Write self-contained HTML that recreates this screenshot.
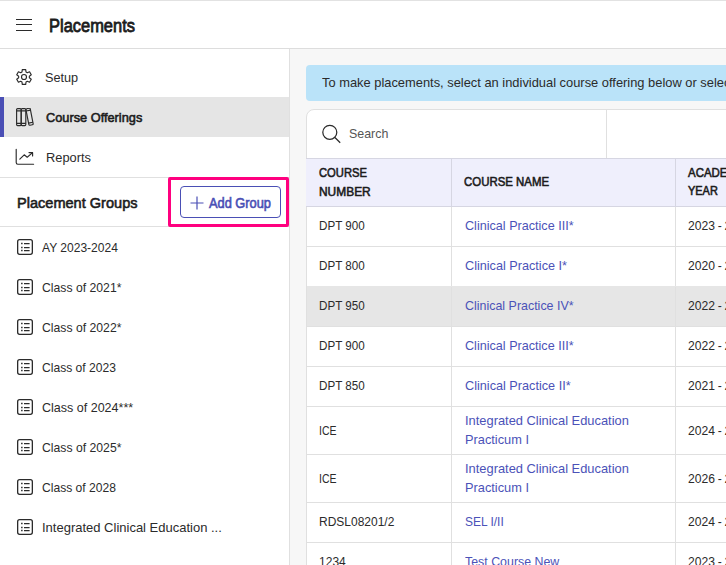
<!DOCTYPE html>
<html><head><meta charset="utf-8">
<style>
*{box-sizing:border-box;margin:0;padding:0}
html,body{width:726px;height:565px;overflow:hidden;background:#f7f7f7;font-family:"Liberation Sans",sans-serif}
.x{position:absolute;white-space:nowrap}
</style></head><body>
<div class="x" style="left:0px;top:0px;width:726px;height:48px;background:#fff;"></div>
<div class="x" style="left:0px;top:0px;width:726px;height:1px;background:#e2e2e2;"></div>
<div class="x" style="left:0px;top:48px;width:726px;height:1px;background:#dddddd;"></div>
<svg class="x" style="left:16px;top:17px" width="16" height="15" viewBox="0 0 16 15"><path d="M0 2.5H16M0 7.5H16M0 13.5H16" stroke="#2b2b2b" stroke-width="1.1"/></svg>
<div class="x" style="left:48.5px;top:14.92px;font-size:18.2px;line-height:22px;-webkit-text-stroke:0.6px currentColor;color:#1c1c1c;transform:scaleX(0.9044);transform-origin:0 0;-webkit-text-stroke:0.8px currentColor;">Placements</div>
<div class="x" style="left:0px;top:49px;width:289px;height:516px;background:#fff;"></div>
<div class="x" style="left:289px;top:49px;width:1px;height:516px;background:#e0e0e0;"></div>
<div class="x" style="left:0px;top:97px;width:289px;height:40px;background:#e5e5e5;"></div>
<div class="x" style="left:0px;top:97px;width:4px;height:40px;background:#4a4fb5;"></div>
<svg class="x" style="left:16px;top:69px" width="16" height="16" viewBox="0 0 16 16"><path d="M5.98 2.99 L6.29 0.59 L9.71 0.59 L10.02 2.99 L11.32 3.74 L13.56 2.82 L15.27 5.78 L13.35 7.25 L13.35 8.75 L15.27 10.22 L13.56 13.18 L11.32 12.26 L10.02 13.01 L9.71 15.41 L6.29 15.41 L5.98 13.01 L4.68 12.26 L2.44 13.18 L0.73 10.22 L2.65 8.75 L2.65 7.25 L0.73 5.78 L2.44 2.82 L4.68 3.74 Z" fill="none" stroke="#2b2b2b" stroke-width="1.15" stroke-linejoin="round"/><circle cx="8" cy="8" r="2.5" fill="none" stroke="#2b2b2b" stroke-width="1.15"/></svg>
<div class="x" style="left:44.7px;top:70.21px;font-size:13.2px;line-height:16px;color:#2b2b2b;transform:scaleX(0.9624);transform-origin:0 0;">Setup</div>
<svg class="x" style="left:16px;top:108px" width="19" height="19" viewBox="0 0 19 19"><g fill="none" stroke="#2b2b2b" stroke-width="1.15" stroke-linejoin="round"><rect x="0.6" y="0.6" width="4.6" height="17" rx="1"/><rect x="5.2" y="0.6" width="4.6" height="17" rx="1"/><path d="M0.6 2.8H9.8M0.6 15.3H9.8"/><g transform="rotate(-11 9.8 0.9)"><rect x="9.8" y="0.9" width="4.4" height="16.8" rx="1"/><path d="M9.8 3H14.2M9.8 15.4H14.2"/></g></g></svg>
<div class="x" style="left:46px;top:109.64px;font-size:13.3px;line-height:16px;-webkit-text-stroke:0.6px currentColor;color:#1c1c1c;transform:scaleX(0.9602);transform-origin:0 0;">Course Offerings</div>
<svg class="x" style="left:15px;top:148px" width="20" height="18" viewBox="0 0 20 18"><g fill="none" stroke="#2b2b2b" stroke-width="1.15" stroke-linejoin="round" stroke-linecap="round"><path d="M1.2 1.2V14.6Q1.2 16.2 2.8 16.2H18.6"/><path d="M4.8 11.2L9.2 6.8L12.2 9.2L17.6 4.6M14 4.6H17.6V8"/></g></svg>
<div class="x" style="left:46.3px;top:150.21px;font-size:13.2px;line-height:16px;color:#2b2b2b;transform:scaleX(0.9736);transform-origin:0 0;">Reports</div>
<div class="x" style="left:0px;top:177px;width:289px;height:1px;background:#e0e0e0;"></div>
<div class="x" style="left:16.7px;top:194.39px;font-size:15.2px;line-height:18px;-webkit-text-stroke:0.6px currentColor;color:#1c1c1c;transform:scaleX(0.9580);transform-origin:0 0;">Placement Groups</div>
<div class="x" style="left:180px;top:186px;width:101px;height:32px;background:transparent;box-sizing:border-box;border:1px solid #4a4fb5;border-radius:4px"></div>
<svg class="x" style="left:190px;top:196px" width="14" height="14" viewBox="0 0 14 14"><path d="M7 0.5V13.5M0.5 7H13.5" stroke="#4a4fb5" stroke-width="1.2"/></svg>
<div class="x" style="left:209.3px;top:195.48px;font-size:14px;line-height:17px;-webkit-text-stroke:0.6px currentColor;color:#4a4fb5;transform:scaleX(0.9157);transform-origin:0 0;">Add Group</div>
<div class="x" style="left:0px;top:226px;width:289px;height:1px;background:#e0e0e0;"></div>
<div class="x" style="left:168px;top:177px;width:121px;height:50px;background:transparent;box-sizing:border-box;border:3px solid #ff007f;border-radius:2px"></div>
<svg class="x" style="left:17px;top:239px" width="16" height="16" viewBox="0 0 16 16"><rect x="0.65" y="0.65" width="14.7" height="14.7" rx="2" fill="none" stroke="#2b2b2b" stroke-width="1.3"/><path d="M4.1 4.5h1.5M4.1 8.5h1.5M4.1 11.5h1.5" stroke="#2b2b2b" stroke-width="1.5"/><path d="M7 4.5h5.6M7 8.5h5.6M7 11.5h5.6" stroke="#2b2b2b" stroke-width="1.25"/></svg>
<div class="x" style="left:42.4px;top:239.91px;font-size:13.2px;line-height:16px;color:#2b2b2b;transform:scaleX(0.9136);transform-origin:0 0;">AY 2023-2024</div>
<svg class="x" style="left:17px;top:279px" width="16" height="16" viewBox="0 0 16 16"><rect x="0.65" y="0.65" width="14.7" height="14.7" rx="2" fill="none" stroke="#2b2b2b" stroke-width="1.3"/><path d="M4.1 4.5h1.5M4.1 8.5h1.5M4.1 11.5h1.5" stroke="#2b2b2b" stroke-width="1.5"/><path d="M7 4.5h5.6M7 8.5h5.6M7 11.5h5.6" stroke="#2b2b2b" stroke-width="1.25"/></svg>
<div class="x" style="left:42.4px;top:279.91px;font-size:13.2px;line-height:16px;color:#2b2b2b;transform:scaleX(0.9260);transform-origin:0 0;">Class of 2021*</div>
<svg class="x" style="left:17px;top:319px" width="16" height="16" viewBox="0 0 16 16"><rect x="0.65" y="0.65" width="14.7" height="14.7" rx="2" fill="none" stroke="#2b2b2b" stroke-width="1.3"/><path d="M4.1 4.5h1.5M4.1 8.5h1.5M4.1 11.5h1.5" stroke="#2b2b2b" stroke-width="1.5"/><path d="M7 4.5h5.6M7 8.5h5.6M7 11.5h5.6" stroke="#2b2b2b" stroke-width="1.25"/></svg>
<div class="x" style="left:42.4px;top:319.91px;font-size:13.2px;line-height:16px;color:#2b2b2b;transform:scaleX(0.9260);transform-origin:0 0;">Class of 2022*</div>
<svg class="x" style="left:17px;top:359px" width="16" height="16" viewBox="0 0 16 16"><rect x="0.65" y="0.65" width="14.7" height="14.7" rx="2" fill="none" stroke="#2b2b2b" stroke-width="1.3"/><path d="M4.1 4.5h1.5M4.1 8.5h1.5M4.1 11.5h1.5" stroke="#2b2b2b" stroke-width="1.5"/><path d="M7 4.5h5.6M7 8.5h5.6M7 11.5h5.6" stroke="#2b2b2b" stroke-width="1.25"/></svg>
<div class="x" style="left:42.4px;top:359.91px;font-size:13.2px;line-height:16px;color:#2b2b2b;transform:scaleX(0.9168);transform-origin:0 0;">Class of 2023</div>
<svg class="x" style="left:17px;top:399px" width="16" height="16" viewBox="0 0 16 16"><rect x="0.65" y="0.65" width="14.7" height="14.7" rx="2" fill="none" stroke="#2b2b2b" stroke-width="1.3"/><path d="M4.1 4.5h1.5M4.1 8.5h1.5M4.1 11.5h1.5" stroke="#2b2b2b" stroke-width="1.5"/><path d="M7 4.5h5.6M7 8.5h5.6M7 11.5h5.6" stroke="#2b2b2b" stroke-width="1.25"/></svg>
<div class="x" style="left:42.4px;top:399.91px;font-size:13.2px;line-height:16px;color:#2b2b2b;transform:scaleX(0.9488);transform-origin:0 0;">Class of 2024***</div>
<svg class="x" style="left:17px;top:439px" width="16" height="16" viewBox="0 0 16 16"><rect x="0.65" y="0.65" width="14.7" height="14.7" rx="2" fill="none" stroke="#2b2b2b" stroke-width="1.3"/><path d="M4.1 4.5h1.5M4.1 8.5h1.5M4.1 11.5h1.5" stroke="#2b2b2b" stroke-width="1.5"/><path d="M7 4.5h5.6M7 8.5h5.6M7 11.5h5.6" stroke="#2b2b2b" stroke-width="1.25"/></svg>
<div class="x" style="left:42.4px;top:439.91px;font-size:13.2px;line-height:16px;color:#2b2b2b;transform:scaleX(0.9260);transform-origin:0 0;">Class of 2025*</div>
<svg class="x" style="left:17px;top:479px" width="16" height="16" viewBox="0 0 16 16"><rect x="0.65" y="0.65" width="14.7" height="14.7" rx="2" fill="none" stroke="#2b2b2b" stroke-width="1.3"/><path d="M4.1 4.5h1.5M4.1 8.5h1.5M4.1 11.5h1.5" stroke="#2b2b2b" stroke-width="1.5"/><path d="M7 4.5h5.6M7 8.5h5.6M7 11.5h5.6" stroke="#2b2b2b" stroke-width="1.25"/></svg>
<div class="x" style="left:42.4px;top:479.91px;font-size:13.2px;line-height:16px;color:#2b2b2b;transform:scaleX(0.9168);transform-origin:0 0;">Class of 2028</div>
<svg class="x" style="left:17px;top:519px" width="16" height="16" viewBox="0 0 16 16"><rect x="0.65" y="0.65" width="14.7" height="14.7" rx="2" fill="none" stroke="#2b2b2b" stroke-width="1.3"/><path d="M4.1 4.5h1.5M4.1 8.5h1.5M4.1 11.5h1.5" stroke="#2b2b2b" stroke-width="1.5"/><path d="M7 4.5h5.6M7 8.5h5.6M7 11.5h5.6" stroke="#2b2b2b" stroke-width="1.25"/></svg>
<div class="x" style="left:42.4px;top:519.91px;font-size:13.2px;line-height:16px;color:#2b2b2b;transform:scaleX(0.9852);transform-origin:0 0;">Integrated Clinical Education ...</div>
<div class="x" style="left:306px;top:65px;width:480px;height:36px;background:#bae3f9;border-radius:4px"></div>
<div class="x" style="left:322.3px;top:74.91px;font-size:13.2px;line-height:16px;color:#2b2b2b;transform:scaleX(0.9763);transform-origin:0 0;">To make placements, select an individual course offering below or select a placement group</div>
<div class="x" style="left:306px;top:109px;width:480px;height:500px;background:#fff;box-sizing:border-box;border:1px solid #e0e0e0;border-radius:8px 8px 0 0"></div>
<div class="x" style="left:606px;top:110px;width:1px;height:48px;background:#e0e0e0;"></div>
<svg class="x" style="left:321px;top:124px" width="21" height="21" viewBox="0 0 21 21"><circle cx="8.8" cy="8.3" r="7" fill="none" stroke="#2b2b2b" stroke-width="1.25"/><path d="M13.9 13.5L19.2 18.7" stroke="#2b2b2b" stroke-width="1.25"/></svg>
<div class="x" style="left:348.9px;top:125.91px;font-size:13.2px;line-height:16px;color:#555;transform:scaleX(0.9420);transform-origin:0 0;">Search</div>
<div class="x" style="left:306px;top:158px;width:480px;height:49px;background:#efeffc;box-sizing:border-box;border-top:1px solid #d6d6e2;border-bottom:1px solid #d6d6e2"></div>
<div class="x" style="left:451px;top:159px;width:1px;height:47px;background:#d6d6e2;"></div>
<div class="x" style="left:675px;top:159px;width:1px;height:47px;background:#d6d6e2;"></div>
<div class="x" style="left:319px;top:165.04px;font-size:13px;line-height:16px;-webkit-text-stroke:0.6px currentColor;color:#1c1c1c;transform:scaleX(0.8630);transform-origin:0 0;">COURSE</div>
<div class="x" style="left:319px;top:184.04px;font-size:13px;line-height:16px;-webkit-text-stroke:0.6px currentColor;color:#1c1c1c;transform:scaleX(0.9177);transform-origin:0 0;">NUMBER</div>
<div class="x" style="left:464.3px;top:173.74px;font-size:13px;line-height:16px;-webkit-text-stroke:0.6px currentColor;color:#1c1c1c;transform:scaleX(0.8792);transform-origin:0 0;">COURSE NAME</div>
<div class="x" style="left:688px;top:164.94px;font-size:13px;line-height:16px;-webkit-text-stroke:0.6px currentColor;color:#1c1c1c;transform:scaleX(0.8811);transform-origin:0 0;">ACADEMIC</div>
<div class="x" style="left:688px;top:183.34px;font-size:13px;line-height:16px;-webkit-text-stroke:0.6px currentColor;color:#1c1c1c;transform:scaleX(0.8418);transform-origin:0 0;">YEAR</div>
<div class="x" style="left:451px;top:207px;width:1px;height:40px;background:#e0e0e0;"></div>
<div class="x" style="left:675px;top:207px;width:1px;height:40px;background:#e0e0e0;"></div>
<div class="x" style="left:306px;top:246px;width:420px;height:1px;background:#e0e0e0;"></div>
<div class="x" style="left:319.2px;top:218.41px;font-size:13.2px;line-height:16px;color:#2b2b2b;transform:scaleX(0.8833);transform-origin:0 0;">DPT 900</div>
<div class="x" style="left:464.8px;top:217.61px;font-size:13.2px;line-height:16px;color:#4b52b8;transform:scaleX(0.9560);transform-origin:0 0;">Clinical Practice III*</div>
<div class="x" style="left:688px;top:218.41px;font-size:13.2px;line-height:16px;color:#2b2b2b;transform:scaleX(0.9195);transform-origin:0 0;word-spacing:-0.7px;">2023 - 2024</div>
<div class="x" style="left:451px;top:247px;width:1px;height:40px;background:#e0e0e0;"></div>
<div class="x" style="left:675px;top:247px;width:1px;height:40px;background:#e0e0e0;"></div>
<div class="x" style="left:306px;top:286px;width:420px;height:1px;background:#e0e0e0;"></div>
<div class="x" style="left:319.2px;top:258.41px;font-size:13.2px;line-height:16px;color:#2b2b2b;transform:scaleX(0.8833);transform-origin:0 0;">DPT 800</div>
<div class="x" style="left:464.8px;top:257.61px;font-size:13.2px;line-height:16px;color:#4b52b8;transform:scaleX(0.9599);transform-origin:0 0;">Clinical Practice I*</div>
<div class="x" style="left:688px;top:258.41px;font-size:13.2px;line-height:16px;color:#2b2b2b;transform:scaleX(0.9195);transform-origin:0 0;word-spacing:-0.7px;">2020 - 2021</div>
<div class="x" style="left:306px;top:286px;width:420px;height:41px;background:#e6e6e6;"></div>
<div class="x" style="left:451px;top:287px;width:1px;height:40px;background:#e0e0e0;"></div>
<div class="x" style="left:675px;top:287px;width:1px;height:40px;background:#e0e0e0;"></div>
<div class="x" style="left:306px;top:326px;width:420px;height:1px;background:#e0e0e0;"></div>
<div class="x" style="left:319.2px;top:298.41px;font-size:13.2px;line-height:16px;color:#2b2b2b;transform:scaleX(0.8833);transform-origin:0 0;">DPT 950</div>
<div class="x" style="left:464.8px;top:297.61px;font-size:13.2px;line-height:16px;color:#4b52b8;transform:scaleX(0.9438);transform-origin:0 0;">Clinical Practice IV*</div>
<div class="x" style="left:688px;top:298.41px;font-size:13.2px;line-height:16px;color:#2b2b2b;transform:scaleX(0.9195);transform-origin:0 0;word-spacing:-0.7px;">2022 - 2023</div>
<div class="x" style="left:451px;top:327px;width:1px;height:40px;background:#e0e0e0;"></div>
<div class="x" style="left:675px;top:327px;width:1px;height:40px;background:#e0e0e0;"></div>
<div class="x" style="left:306px;top:366px;width:420px;height:1px;background:#e0e0e0;"></div>
<div class="x" style="left:319.2px;top:338.41px;font-size:13.2px;line-height:16px;color:#2b2b2b;transform:scaleX(0.8833);transform-origin:0 0;">DPT 900</div>
<div class="x" style="left:464.8px;top:337.61px;font-size:13.2px;line-height:16px;color:#4b52b8;transform:scaleX(0.9560);transform-origin:0 0;">Clinical Practice III*</div>
<div class="x" style="left:688px;top:338.41px;font-size:13.2px;line-height:16px;color:#2b2b2b;transform:scaleX(0.9195);transform-origin:0 0;word-spacing:-0.7px;">2022 - 2023</div>
<div class="x" style="left:451px;top:367px;width:1px;height:40px;background:#e0e0e0;"></div>
<div class="x" style="left:675px;top:367px;width:1px;height:40px;background:#e0e0e0;"></div>
<div class="x" style="left:306px;top:406px;width:420px;height:1px;background:#e0e0e0;"></div>
<div class="x" style="left:319.2px;top:378.41px;font-size:13.2px;line-height:16px;color:#2b2b2b;transform:scaleX(0.8833);transform-origin:0 0;">DPT 850</div>
<div class="x" style="left:464.8px;top:377.61px;font-size:13.2px;line-height:16px;color:#4b52b8;transform:scaleX(0.9606);transform-origin:0 0;">Clinical Practice II*</div>
<div class="x" style="left:688px;top:378.41px;font-size:13.2px;line-height:16px;color:#2b2b2b;transform:scaleX(0.9195);transform-origin:0 0;word-spacing:-0.7px;">2021 - 2022</div>
<div class="x" style="left:451px;top:407px;width:1px;height:48px;background:#e0e0e0;"></div>
<div class="x" style="left:675px;top:407px;width:1px;height:48px;background:#e0e0e0;"></div>
<div class="x" style="left:306px;top:454px;width:420px;height:1px;background:#e0e0e0;"></div>
<div class="x" style="left:319.2px;top:422.81px;font-size:13.2px;line-height:16px;color:#2b2b2b;transform:scaleX(0.7953);transform-origin:0 0;">ICE</div>
<div class="x" style="left:464.8px;top:412.71px;font-size:13.2px;line-height:16px;color:#4b52b8;transform:scaleX(0.9760);transform-origin:0 0;">Integrated Clinical Education</div>
<div class="x" style="left:464.8px;top:432.21px;font-size:13.2px;line-height:16px;color:#4b52b8;transform:scaleX(0.9695);transform-origin:0 0;">Practicum I</div>
<div class="x" style="left:688px;top:422.81px;font-size:13.2px;line-height:16px;color:#2b2b2b;transform:scaleX(0.9195);transform-origin:0 0;word-spacing:-0.7px;">2024 - 2025</div>
<div class="x" style="left:451px;top:455px;width:1px;height:48px;background:#e0e0e0;"></div>
<div class="x" style="left:675px;top:455px;width:1px;height:48px;background:#e0e0e0;"></div>
<div class="x" style="left:306px;top:502px;width:420px;height:1px;background:#e0e0e0;"></div>
<div class="x" style="left:319.2px;top:470.81px;font-size:13.2px;line-height:16px;color:#2b2b2b;transform:scaleX(0.7953);transform-origin:0 0;">ICE</div>
<div class="x" style="left:464.8px;top:460.71px;font-size:13.2px;line-height:16px;color:#4b52b8;transform:scaleX(0.9760);transform-origin:0 0;">Integrated Clinical Education</div>
<div class="x" style="left:464.8px;top:480.21px;font-size:13.2px;line-height:16px;color:#4b52b8;transform:scaleX(0.9695);transform-origin:0 0;">Practicum I</div>
<div class="x" style="left:688px;top:470.81px;font-size:13.2px;line-height:16px;color:#2b2b2b;transform:scaleX(0.9195);transform-origin:0 0;word-spacing:-0.7px;">2026 - 2027</div>
<div class="x" style="left:451px;top:503px;width:1px;height:40px;background:#e0e0e0;"></div>
<div class="x" style="left:675px;top:503px;width:1px;height:40px;background:#e0e0e0;"></div>
<div class="x" style="left:306px;top:542px;width:420px;height:1px;background:#e0e0e0;"></div>
<div class="x" style="left:319.2px;top:514.41px;font-size:13.2px;line-height:16px;color:#2b2b2b;transform:scaleX(0.9092);transform-origin:0 0;">RDSL08201/2</div>
<div class="x" style="left:464.8px;top:513.61px;font-size:13.2px;line-height:16px;color:#4b52b8;transform:scaleX(0.9066);transform-origin:0 0;">SEL I/II</div>
<div class="x" style="left:688px;top:514.41px;font-size:13.2px;line-height:16px;color:#2b2b2b;transform:scaleX(0.9195);transform-origin:0 0;word-spacing:-0.7px;">2024 - 2025</div>
<div class="x" style="left:451px;top:543px;width:1px;height:40px;background:#e0e0e0;"></div>
<div class="x" style="left:675px;top:543px;width:1px;height:40px;background:#e0e0e0;"></div>
<div class="x" style="left:306px;top:582px;width:420px;height:1px;background:#e0e0e0;"></div>
<div class="x" style="left:319.2px;top:554.41px;font-size:13.2px;line-height:16px;color:#2b2b2b;transform:scaleX(0.9126);transform-origin:0 0;">1234</div>
<div class="x" style="left:464.8px;top:553.61px;font-size:13.2px;line-height:16px;color:#4b52b8;transform:scaleX(0.9393);transform-origin:0 0;">Test Course New</div>
<div class="x" style="left:688px;top:554.41px;font-size:13.2px;line-height:16px;color:#2b2b2b;transform:scaleX(0.9195);transform-origin:0 0;word-spacing:-0.7px;">2023 - 2024</div>
<div class="x" style="left:306px;top:207px;width:1px;height:400px;background:#e0e0e0;"></div>
</body></html>
